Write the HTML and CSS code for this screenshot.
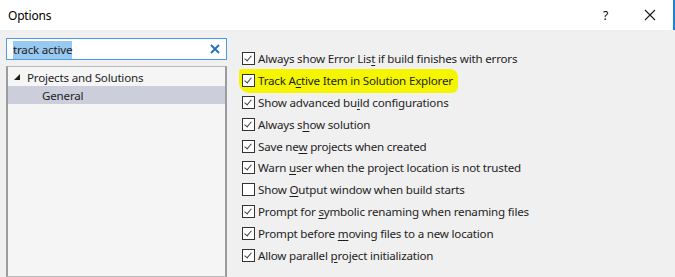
FILE: index.html
```html
<!DOCTYPE html>
<html>
<head>
<meta charset="utf-8">
<link rel="stylesheet" href="styles.css">
</head>
<body>
<div class="window">
  <div class="titlebar">
    <span class="title">Options</span>
    <div class="title-buttons">
      <span class="help">?</span>
      <svg class="close" width="12" height="12" viewBox="0 0 12 12"><path d="M1 1 L11 11 M11 1 L1 11" stroke="#1a1a1a" stroke-width="1.1" fill="none"/></svg>
    </div>
  </div>
  <div class="content">
    <div class="left">
      <div class="search">
        <span class="search-text"><span class="sel">track active</span></span>
        <svg class="clear" width="10" height="10" viewBox="0 0 10 10"><path d="M1 1 L9 9 M9 1 L1 9" stroke="#1e6fc4" stroke-width="1.8" fill="none"/></svg>
      </div>
      <div class="tree">
        <div class="tree-row">
          <svg class="expander" width="6" height="6" viewBox="0 0 6 6"><polygon points="6,0 6,6 0,6" fill="#1e1e1e"/></svg>
          <span>Projects and Solutions</span>
        </div>
        <div class="tree-row child selected"><span>General</span></div>
      </div>
    </div>
    <div class="right">
      <div class="opt"><span class="cb on"></span><span>Always show Error Lis<u>t</u> if build finishes with errors</span></div>
      <div class="opt hl"><span class="mark"><span class="cb on"></span><span>Track A<u>c</u>tive Item in Solution Explorer</span></span></div>
      <div class="opt"><span class="cb on"></span><span>Show advanced bu<u>i</u>ld configurations</span></div>
      <div class="opt"><span class="cb on"></span><span>Always s<u>h</u>ow solution</span></div>
      <div class="opt"><span class="cb on"></span><span>Save ne<u>w</u> projects when created</span></div>
      <div class="opt"><span class="cb on"></span><span>Warn <u>u</u>ser when the project location is not trusted</span></div>
      <div class="opt"><span class="cb"></span><span>Show <u>O</u>utput window when build starts</span></div>
      <div class="opt"><span class="cb on"></span><span>Prompt for <u>s</u>ymbolic renaming when renaming files</span></div>
      <div class="opt"><span class="cb on"></span><span>Prompt before <u>m</u>oving files to a new location</span></div>
      <div class="opt"><span class="cb on"></span><span>Allow parallel <u>p</u>roject initialization</span></div>
    </div>
  </div>
</div>
</body>
</html>
```

FILE: styles.css
```css
html, body {
  margin: 0;
  padding: 0;
}
body {
  width: 675px;
  height: 277px;
  overflow: hidden;
  font-family: "Noto Sans", "Open Sans", sans-serif;
  font-size: 11.6px;
  letter-spacing: -0.2px;
  color: #1e1e1e;
  background: #f0f0f0;
}
.window {
  display: flex;
  flex-direction: column;
  height: 277px;
}
.titlebar {
  height: 30px;
  background: #ffffff;
  display: flex;
  align-items: center;
  justify-content: space-between;
  border-right: 2px solid #1883d7;
  box-sizing: border-box;
  padding-left: 8px;
}
.title {
  font-size: 12px;
  color: #000;
}
.title-buttons {
  display: flex;
  align-items: center;
  gap: 36px;
  padding-right: 17px;
}
.help {
  font-size: 12px;
  color: #000;
}
.content {
  flex: 1;
  display: flex;
  min-height: 0;
}
.left {
  width: 221px;
  margin-left: 6px;
  padding-top: 8px;
  display: flex;
  flex-direction: column;
  gap: 6px;
}
.search {
  height: 22px;
  box-sizing: border-box;
  border: 1px solid #4a9de8;
  background: #fff;
  display: flex;
  align-items: center;
  justify-content: space-between;
  padding: 0 6px 0 6px;
}
.sel {
  background: #99c9ef;
  padding: 1px 0 2px;
}
.tree {
  flex: 1;
  background: #f5f5f5;
  border: 1px solid #b8b8b8;
  border-left: 2px solid #9c9ca0;
  border-right: 2px solid #9c9ca0;
  padding: 1px 0 0 0;
}
.tree-row {
  height: 18px;
  display: flex;
  align-items: center;
  padding-left: 6px;
  gap: 7px;
}
.tree-row.child {
  padding-left: 34px;
}
.selected {
  background: #cccedb;
}
.right {
  flex: 1;
  padding-left: 15px;
  padding-top: 18px;
  display: flex;
  flex-direction: column;
}
.opt {
  height: 21.8px;
  display: flex;
  align-items: center;
  gap: 3px;
}
.mark {
  display: flex;
  align-items: center;
  gap: 3px;
  background: #f5f500;
  margin-left: -3px;
  padding: 4px 5px 5px 3px;
  border-radius: 3px 8px 6px 10px;
}
.cb {
  width: 13px;
  height: 13px;
  box-sizing: border-box;
  border: 1px solid #333;
  background: #fff;
  position: relative;
  flex: none;
}
.cb.on::after {
  content: "";
  position: absolute;
  left: 3px;
  top: 1px;
  width: 3px;
  height: 6px;
  border-right: 1.3px solid #404040;
  border-bottom: 1.3px solid #404040;
  transform: rotate(40deg);
}
u {
  text-decoration: underline;
  text-underline-offset: 2px;
}
```
